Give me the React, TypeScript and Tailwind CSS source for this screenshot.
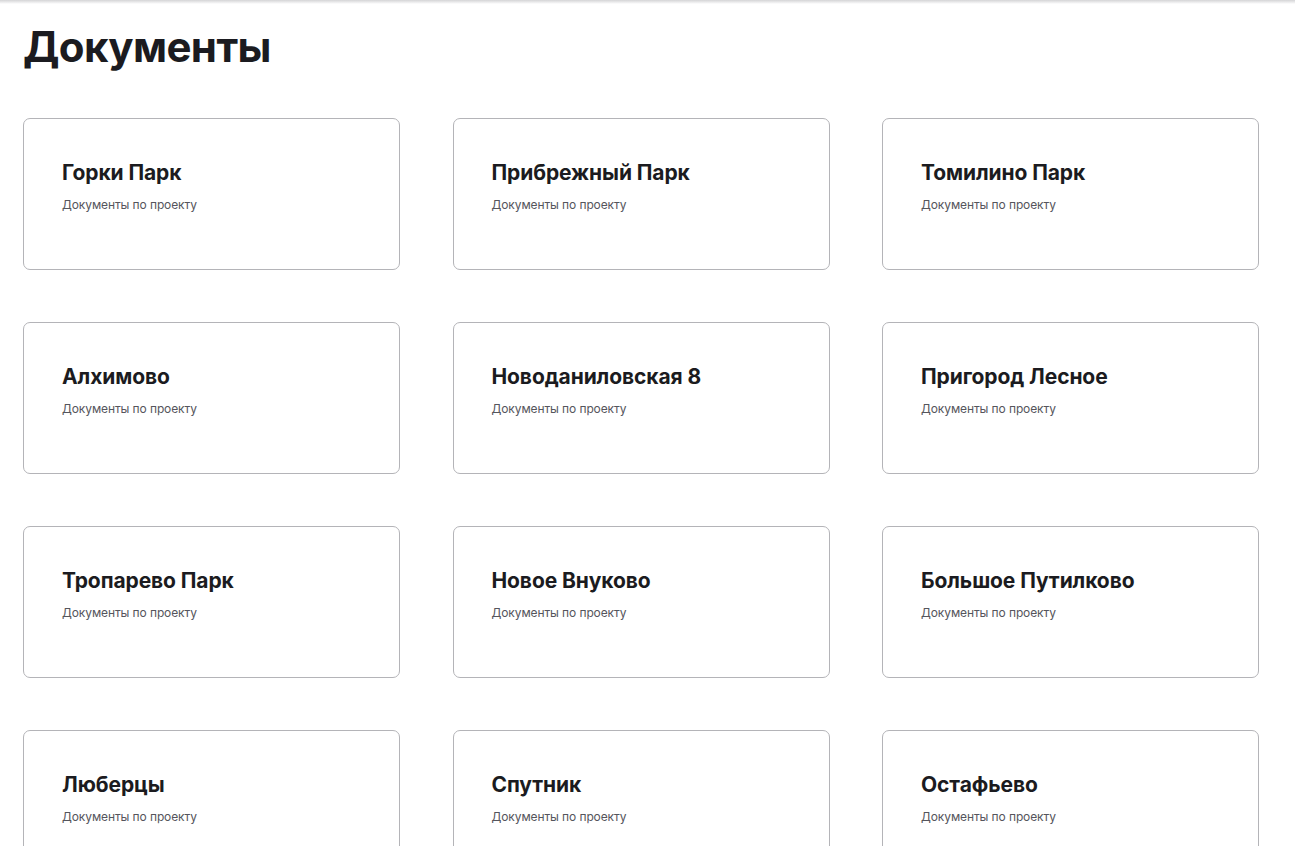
import React from "react";

const projects = [
  "Горки Парк",
  "Прибрежный Парк",
  "Томилино Парк",
  "Алхимово",
  "Новоданиловская 8",
  "Пригород Лесное",
  "Тропарево Парк",
  "Новое Внуково",
  "Большое Путилково",
  "Люберцы",
  "Спутник",
  "Остафьево",
];

function DocCard({ name }: { name: string }) {
  return (
    <a
      href="#"
      className="flex h-[152px] flex-col rounded-[7px] border border-[#b4b4b8] bg-white px-[38px] pt-[40px]"
    >
      <h3 className="text-[21px] font-bold leading-[28px] tracking-[-0.1px] text-[#1b1b20]">{name}</h3>
      <p className="mt-[9px] text-[12px] leading-[18px] tracking-[-0.1px] text-[#55555c]">Документы по проекту</p>
    </a>
  );
}

export default function App() {
  return (
    <div className="min-h-screen bg-white font-['Inter',sans-serif]">
      {/* top shadow */}
      <div className="h-[4px] bg-gradient-to-b from-[#d4d4d6] to-white" />
      <div className="pl-[23px] pr-[36px]">
        <h1 className="mt-[18px] text-[42px] font-bold leading-[50px] tracking-[-0.6px] text-[#1b1b20]">
          Документы
        </h1>
        <div className="mt-[46px] grid grid-cols-[377px_377px_377px] gap-x-[52.5px] gap-y-[52px] pb-10">
          {projects.map((p) => (
            <DocCard key={p} name={p} />
          ))}
        </div>
      </div>
    </div>
  );
}
